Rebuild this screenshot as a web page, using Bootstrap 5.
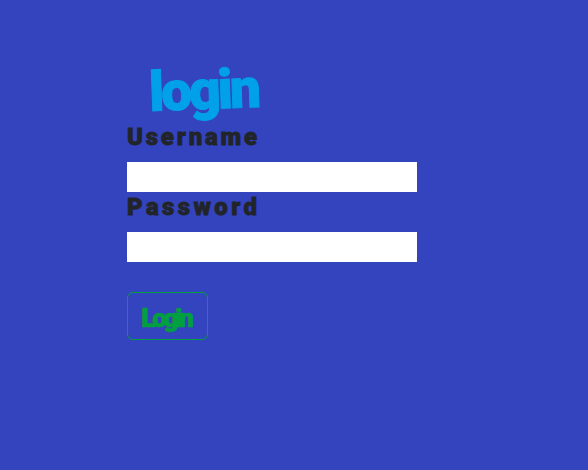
<!DOCTYPE html>
<html lang="en">
<head>
<meta charset="utf-8">
<meta name="viewport" content="width=device-width, initial-scale=1">
<title>login</title>
<link href="https://cdn.jsdelivr.net/npm/bootstrap@5.3.0/dist/css/bootstrap.min.css" rel="stylesheet">
<style>
body { background: #3443be; font-family: Roboto, sans-serif; font-weight: 900; min-height: 100vh; }
.login-panel { width: 290px; margin-left: 127px; padding-top: 58px; }
.login-title { color: #00a1e9; font-size: 55px; line-height: 64px; font-weight: 900; letter-spacing: -3px; padding-left: 22px; -webkit-text-stroke: 1px #00a1e9; }
.login-title span { display: inline-block; transform: rotate(-2deg); }
.login-label { color: #212529; font-size: 24px; line-height: 30px; height: 40px; letter-spacing: 2.8px; white-space: nowrap; -webkit-text-stroke: .8px #212529; }
.login-label-wide { letter-spacing: 3.4px; }
.login-input { height: 30px; }
.login-btn { --bs-btn-color: #00a040; --bs-btn-border-color: #00a040; --bs-btn-border-radius: 6px; width: 81px; height: 48px; margin-top: 30px; padding: 3px 3px 0 0; font-size: 26px; line-height: 30px; font-weight: 900; letter-spacing: -3.2px; -webkit-text-stroke: .6px #00a040; }
</style>
<script src="https://cdn.jsdelivr.net/npm/bootstrap@5.3.0/dist/js/bootstrap.bundle.min.js"></script>
</head>
<body>
<main class="login-panel">
  <h1 class="login-title mb-0"><span>login</span></h1>
  <form>
    <label class="login-label d-block" for="username">Username</label>
    <input class="login-input form-control border-0 rounded-0 bg-white" id="username" type="text">
    <label class="login-label login-label-wide d-block" for="password">Password</label>
    <input class="login-input form-control border-0 rounded-0 bg-white" id="password" type="password">
    <button class="login-btn btn btn-outline-success d-flex align-items-center justify-content-center" type="button">Login</button>
  </form>
</main>
</body>
</html>
